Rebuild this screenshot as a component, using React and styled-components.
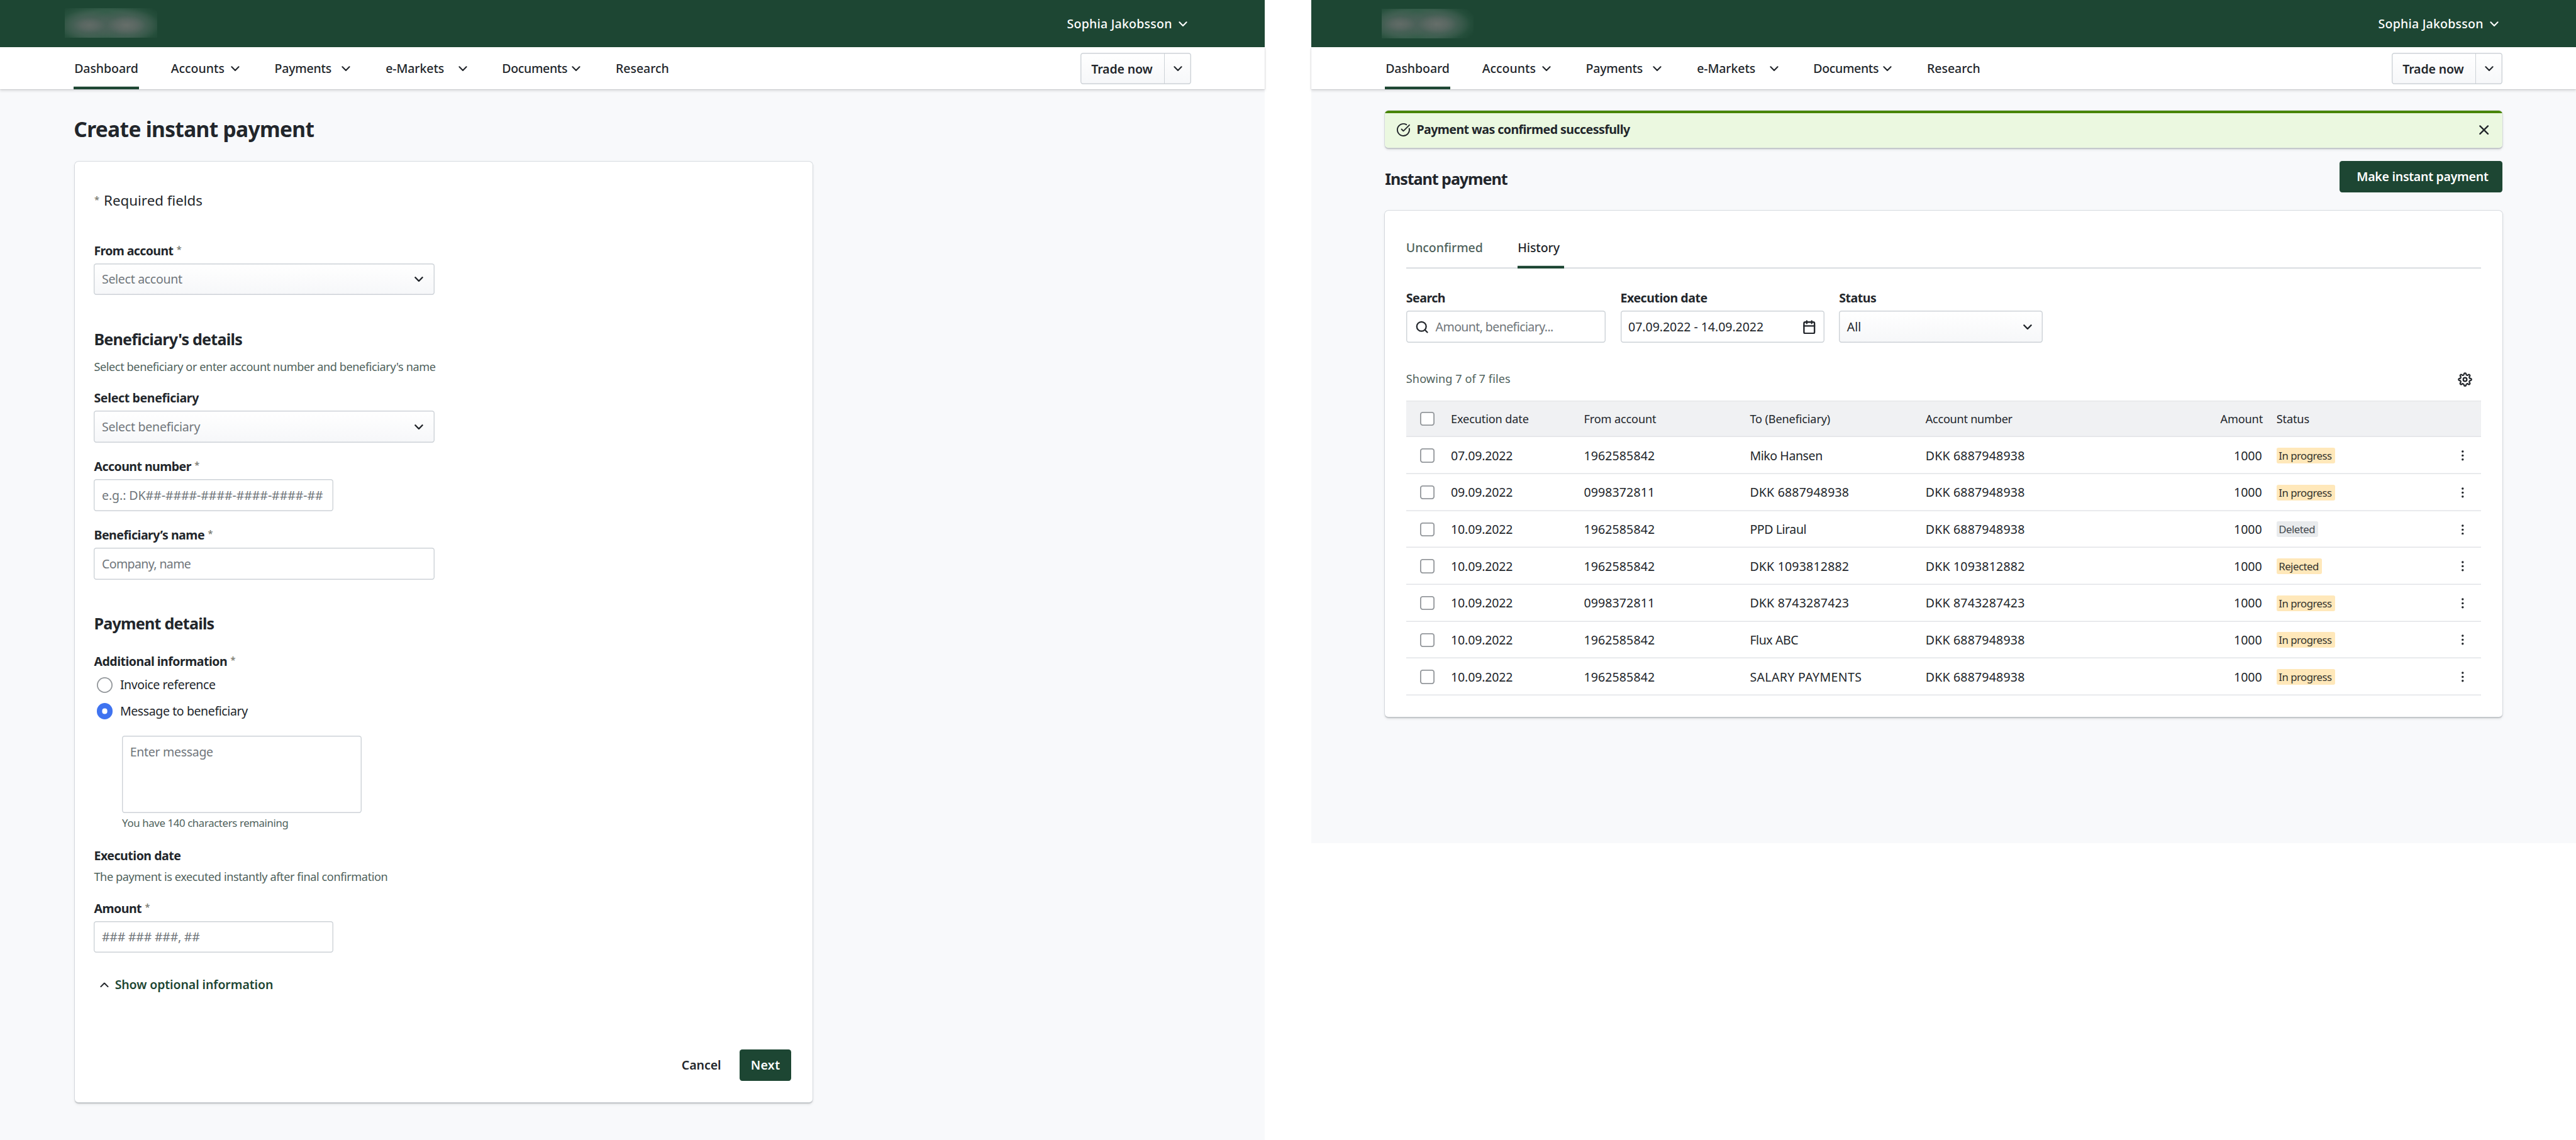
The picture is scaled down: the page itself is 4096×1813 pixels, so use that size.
import React from "react"
import styled, { createGlobalStyle, css } from "styled-components"
import { CircleCheckBig, Search } from "lucide-react"

const ink = "#22262b"
const green = "#1d4633"
const muted = "#4f625c"
const placeholder = "#70767b"
const line = "#cdd2d7"

const navItems = [
  { label: "Dashboard", width: 11, active: true, track: -0.004 },
  { label: "Accounts", width: 11.8, chevron: 6.9, track: -0.002 },
  { label: "Payments", width: 12.65, chevron: 7.7, track: -0.012 },
  { label: "e-Markets", width: 13.25, chevron: 8.35, track: -0.006 },
  { label: "Documents", width: 12.95, chevron: 8, track: -0.018 },
  { label: "Research", width: 8, track: -0.004 },
]

const payments = [
  ["07.09.2022", "1962585842", "Miko Hansen", "DKK 6887948938", "In progress"],
  ["09.09.2022", "0998372811", "DKK 6887948938", "DKK 6887948938", "In progress"],
  ["10.09.2022", "1962585842", "PPD Liraul", "DKK 6887948938", "Deleted"],
  ["10.09.2022", "1962585842", "DKK 1093812882", "DKK 1093812882", "Rejected"],
  ["10.09.2022", "0998372811", "DKK 8743287423", "DKK 8743287423", "In progress"],
  ["10.09.2022", "1962585842", "Flux ABC", "DKK 6887948938", "In progress"],
  ["10.09.2022", "1962585842", "SALARY PAYMENTS", "DKK 6887948938", "In progress"],
]

const cellTrack = text => {
  if (text === "SALARY PAYMENTS") return 0.018
  if (text.startsWith("DKK")) return 0.009
  if (text.includes(".")) return -0.008
  return /^\d+$/.test(text) ? 0.005 : -0.022
}

// outline of a cog with eight round teeth
const cogPath = () => {
  const point = deg => {
    const a = (deg * Math.PI) / 180
    return `${(9 + 6.5 * Math.cos(a)).toFixed(2)} ${(9 + 6.5 * Math.sin(a)).toFixed(2)}`
  }
  let d = `M${point(-10.5)}`
  for (let i = 0; i < 8; i++) {
    d += `A1.2 1.2 0 0 1 ${point(i * 45 + 10.5)}`
    d += `A1.4 1.4 0 0 0 ${point(i * 45 + 34.5)}`
  }
  return d + "Z"
}

const Chevron = ({ up, bold }) => (
  <ChevronSvg viewBox="0 0 10 6" $up={up} strokeWidth={bold ? 1.75 : 1.5}>
    <path d="M1 0.9l4 4.1 4-4.1" />
  </ChevronSvg>
)

const CalendarIcon = () => (
  <CalendarSvg viewBox="0 0 14 16">
    <rect x="1" y="2.3" width="12" height="12.9" rx="1.4" />
    <path d="M1 6.7h12M4.2 1v2.8M9.8 1v2.8" />
  </CalendarSvg>
)

const CogIcon = () => (
  <CogSvg viewBox="0 0 18 18">
    <path d={cogPath()} />
    <circle cx="9" cy="9" r="2.05" />
  </CogSvg>
)

const DotsIcon = () => (
  <DotsSvg viewBox="0 0 4 12">
    <circle cx="2" cy="1.5" r="1.25" />
    <circle cx="2" cy="6" r="1.25" />
    <circle cx="2" cy="10.5" r="1.25" />
  </DotsSvg>
)

const Header = ({ shifted }) => (
  <>
    <TopBar>
      <Logo $shifted={shifted} />
      <User>
        Sophia Jakobsson
        <Chevron />
      </User>
    </TopBar>
    <Nav>
      {navItems.map(item => (
        <NavItem key={item.label} $width={item.width}>
          <NavLabel
            $active={item.active}
            $width={item.chevron}
            $track={item.track}
          >
            {item.label}
          </NavLabel>
          {item.chevron && <Chevron />}
        </NavItem>
      ))}
      <TradeButton>
        <TradeLabel>Trade now</TradeLabel>
        <TradeToggle>
          <Chevron />
        </TradeToggle>
      </TradeButton>
    </Nav>
  </>
)

const Field = ({ label, required, track, gap, children }) => (
  <FieldWrap $gap={gap}>
    <Label $track={track}>
      {label}
      {required && <Star>*</Star>}
    </Label>
    {children}
  </FieldWrap>
)

const CreatePayment = () => (
  <Panel $tall>
    <Header />
    <FormPage>
      <Title>Create instant payment</Title>
      <FormCard>
        <RequiredNote>
          <Star $lead>*</Star>Required fields
        </RequiredNote>
        <Field label="From account" required track={-0.032} gap={3.5}>
          <Box $width={38.75} $select $track={-0.016}>
            Select account
            <Chevron bold />
          </Box>
        </Field>

        <SectionTitle $gap={3.85} $track={-0.031}>
          Beneficiary's details
        </SectionTitle>
        <Hint $gap={0.85}>
          Select beneficiary or enter account number and beneficiary's name
        </Hint>
        <Field label="Select beneficiary" track={-0.018} gap={1.6}>
          <Box $width={38.75} $select $track={-0.013}>
            Select beneficiary
            <Chevron bold />
          </Box>
        </Field>
        <Field label="Account number" required track={-0.028} gap={1.7}>
          <Box $width={27.25} $track={-0.004}>
            e.g.: DK##-####-####-####-####-##
          </Box>
        </Field>
        <Field label="Beneficiary’s name" required track={-0.025} gap={1.7}>
          <Box $width={38.8} $track={-0.032}>
            Company, name
          </Box>
        </Field>

        <SectionTitle $gap={3.85} $track={-0.031}>
          Payment details
        </SectionTitle>
        <Field label="Additional information" required gap={2.05}>
          <Radio>
            <RadioDot />
            Invoice reference
          </Radio>
          <Radio>
            <RadioDot $checked />
            Message to beneficiary
          </Radio>
          <TextArea>Enter message</TextArea>
          <Counter>You have 140 characters remaining</Counter>
        </Field>
        <Label $gap={1.84} $track={-0.025}>
          Execution date
        </Label>
        <Hint $gap={0.43}>
          The payment is executed instantly after final confirmation
        </Hint>
        <Field label="Amount" required gap={1.57}>
          <Box $width={27.25} $track={-0.013}>
            ### ### ###, ##
          </Box>
        </Field>
        <Toggle>
          <Chevron up />
          Show optional information
        </Toggle>
        <Actions>
          <TextButton>Cancel</TextButton>
          <Button $width={5.9} $track={0.018}>
            Next
          </Button>
        </Actions>
      </FormCard>
    </FormPage>
  </Panel>
)

const PaymentHistory = () => (
  <Panel>
    <Header shifted />
    <HistoryPage>
      <Alert>
        <CircleCheckBig />
        <AlertText>Payment was confirmed successfully</AlertText>
        <CloseSvg viewBox="0 0 11 11">
          <path d="M1 1l9 9M10 1l-9 9" />
        </CloseSvg>
      </Alert>
      <PageHead>
        <PageTitle>Instant payment</PageTitle>
        <Button $width={18.5} $track={-0.015} $shift>
          Make instant payment
        </Button>
      </PageHead>
      <HistoryCard>
        <Tabs>
          <Tab $muted>Unconfirmed</Tab>
          <Tab $active>History</Tab>
        </Tabs>
        <Filters>
          <Field label="Search">
            <Box $width={22.7} $track={-0.031} $icon>
              <Search strokeWidth={2.4} />
              Amount, beneficiary...
            </Box>
          </Field>
          <Field label="Execution date" track={-0.025}>
            <Box $width={23.2} $filled $track={-0.003}>
              07.09.2022 - 14.09.2022
              <CalendarIcon />
            </Box>
          </Field>
          <Field label="Status">
            <Box $width={23.2} $filled $select>
              All
              <Chevron bold />
            </Box>
          </Field>
        </Filters>
        <TableBar>
          Showing 7 of 7 files
          <CogIcon />
        </TableBar>
        <HeadRow>
          <Checkbox />
          <HeadCell>Execution date</HeadCell>
          <HeadCell>From account</HeadCell>
          <HeadCell>To (Beneficiary)</HeadCell>
          <HeadCell $track={-0.015}>Account number</HeadCell>
          <HeadCell $right>Amount</HeadCell>
          <HeadCell>Status</HeadCell>
        </HeadRow>
        {payments.map(([date, from, to, account, status], i) => (
          <Row key={i}>
            <Checkbox />
            {[date, from, to, account].map((text, j) => (
              <Cell key={j} $track={cellTrack(text)}>
                {text}
              </Cell>
            ))}
            <Cell $right>1000</Cell>
            <Tag $grey={status === "Deleted"}>{status}</Tag>
            <DotsIcon />
          </Row>
        ))}
      </HistoryCard>
    </HistoryPage>
  </Panel>
)

const App = () => (
  <>
    <GlobalStyle />
    <Canvas>
      <CreatePayment />
      <PaymentHistory />
    </Canvas>
  </>
)

// 1rem is ten units of the 2933 unit wide canvas
const GlobalStyle = createGlobalStyle`
  html {
    font-size: 13.9652px;
  }
  body {
    margin: 0;
    background: #fff;
    color: ${ink};
    font-family: "Noto Sans", "Open Sans", sans-serif;
    font-size: 1.4rem;
    line-height: 2rem;
    overflow: hidden;
  }
  * {
    box-sizing: border-box;
  }
`

const tracking = css`
  letter-spacing: ${p => p.$track || 0}em;
`

const Canvas = styled.div`
  display: flex;
  align-items: flex-start;
  justify-content: space-between;
  width: 293.3rem;
  height: 100vh;
`

const Panel = styled.div`
  width: 144rem;
  height: ${p => (p.$tall ? "100vh" : "96rem")};
  background: #f8f9fb;
`

const TopBar = styled.header`
  display: flex;
  align-items: center;
  justify-content: space-between;
  height: 5.4rem;
  padding: 0 8.8rem 0 7.4rem;
  background: ${green};
`

// two soft spots on a lighter green patch, cut off at the box edges
const spots = (left, right, y) => css`
  background-image:
    radial-gradient(1.8rem 0.9rem at ${left}rem ${y}rem, rgba(130, 126, 124, 0.35), transparent),
    radial-gradient(2.2rem 1.1rem at ${right}rem ${y}rem, rgba(130, 126, 124, 0.45), transparent),
    radial-gradient(3.4rem 1.8rem at ${left}rem ${y}rem, rgba(82, 98, 93, 0.9) 25%, transparent),
    radial-gradient(3.8rem 1.9rem at ${right}rem ${y}rem, rgba(82, 98, 93, 0.9) 30%, transparent),
    radial-gradient(6.8rem 3rem at ${(left + right) / 2}rem ${y}rem, #355d4a 55%, transparent);
`

const Logo = styled.div`
  width: 10.5rem;
  height: 3.4rem;
  margin-left: ${p => (p.$shifted ? "0.6rem" : "0")};
  margin-top: ${p => (p.$shifted ? "0" : "-0.2rem")};
  ${p => (p.$shifted ? spots(2.1, 6.3, 1.75) : spots(2.8, 7, 1.95))}
`

const User = styled.div`
  display: flex;
  align-items: center;
  gap: 0.75rem;
  color: #fff;
  font-weight: 540;
  letter-spacing: 0.011em;
`

const Nav = styled.nav`
  position: relative;
  display: flex;
  height: 4.8rem;
  padding: 0 8.4rem;
  background: #fff;
  box-shadow:
    0 0.05rem 0.1rem rgba(34, 38, 43, 0.4),
    0 0.2rem 0.3rem rgba(34, 38, 43, 0.14);
`

const NavItem = styled.div`
  display: flex;
  align-items: center;
  width: ${p => p.$width}rem;
  font-weight: 540;
`

const NavLabel = styled.span`
  width: ${p => (p.$width ? `${p.$width}rem` : "auto")};
  height: 100%;
  padding-left: 0.06rem;
  line-height: 4.87rem;
  white-space: nowrap;
  ${tracking}
  ${p =>
    p.$active &&
    css`
      width: 7.4rem;
      box-shadow: inset 0 -0.3rem ${green};
    `}
`

const TradeButton = styled.div`
  display: flex;
  width: 12.6rem;
  height: 3.6rem;
  margin: 0.6rem 0 0 auto;
  border-radius: 0.3rem;
  background: linear-gradient(#fff, #f6f7f9);
  box-shadow: inset 0 0 0 0.1rem ${line};
`

const TradeLabel = styled.span`
  width: 9.6rem;
  padding-left: 1.25rem;
  border-right: 0.1rem solid ${line};
  font-weight: 600;
  line-height: 3.66rem;
  letter-spacing: -0.008em;
`

const TradeToggle = styled.span`
  display: flex;
  flex: 1;
  align-items: center;
  justify-content: center;
`

const FormPage = styled.main`
  padding: 2.66rem 0 0 8.5rem;
`

const Title = styled.h1`
  margin: 0 0 1.94rem -0.1rem;
  font-size: 2.4rem;
  font-weight: 700;
  line-height: 3.6rem;
  letter-spacing: -0.02em;
`

const card = css`
  border-radius: 0.4rem;
  box-shadow:
    0 0 0 0.05rem ${line},
    0 0.1rem 0.1rem rgba(34, 38, 43, 0.22),
    0 0.2rem 0.3rem rgba(34, 38, 43, 0.1);
`

const FormCard = styled.section`
  display: flex;
  flex-direction: column;
  width: 84rem;
  height: 107.1rem;
  padding: 3.2rem 2.4rem 2.4rem 2.2rem;
  background: #fff;
  ${card}
`

const RequiredNote = styled.p`
  margin: 0;
  font-size: 1.6rem;
  line-height: 2.4rem;
`

const Star = styled.span`
  position: relative;
  top: -0.28rem;
  margin-left: ${p => (p.$lead ? "0.05rem" : "0.38rem")};
  margin-right: ${p => (p.$lead ? "0.5rem" : "0")};
  color: #7c7c72;
  font-size: 1.05rem;
  font-weight: 600;
  line-height: 1;
`

const FieldWrap = styled.div`
  display: flex;
  flex-direction: column;
  margin-top: ${p => p.$gap || 0}rem;
`

const Label = styled.div`
  margin-top: ${p => p.$gap || 0}rem;
  padding-top: 0.06rem;
  font-weight: 680;
  line-height: 1.94rem;
  letter-spacing: ${p => p.$track || -0.026}em;
`

const Box = styled.div`
  display: flex;
  align-items: center;
  justify-content: ${p => (p.$icon ? "flex-start" : "space-between")};
  gap: 0.75rem;
  width: ${p => p.$width}rem;
  height: 3.6rem;
  margin-top: 0.5rem;
  padding: 0.06rem ${p => (p.$select ? "1.25rem" : "1rem")} 0
    ${p => (p.$icon ? "1rem" : "0.9rem")};
  border-radius: 0.3rem;
  background: ${p => (p.$select ? "linear-gradient(#fff, #f6f7f9)" : "#fff")};
  box-shadow: inset 0 0 0 0.1rem ${line};
  color: ${p => (p.$filled ? ink : placeholder)};
  white-space: nowrap;
  ${tracking}

  .lucide {
    width: 1.6rem;
    height: 1.6rem;
    color: ${ink};
  }
`

const SectionTitle = styled.h2`
  margin: ${p => p.$gap}rem 0 0;
  font-size: 1.8rem;
  font-weight: 690;
  line-height: 2.4rem;
  ${tracking}
`

const Hint = styled.p`
  margin: ${p => p.$gap}rem 0 0;
  padding-top: 0.1rem;
  color: ${muted};
  font-size: 1.3rem;
  line-height: 1.9rem;
  letter-spacing: -0.023em;
`

const Radio = styled.div`
  display: flex;
  align-items: center;
  height: 3rem;
  padding-left: 0.3rem;
  gap: 0.87rem;
  letter-spacing: -0.021em;

  ${Label} + & {
    margin-top: 0.2rem;
  }
`

const RadioDot = styled.span`
  width: 1.8rem;
  height: 1.8rem;
  border-radius: 50%;
  background: #fff;
  box-shadow: inset 0 0 0
    ${p => (p.$checked ? "0.6rem #3f73f0" : "0.13rem #93979b")};
`

const TextArea = styled.div`
  width: 27.3rem;
  height: 8.8rem;
  margin: 1.3rem 0 0 3.2rem;
  padding: 0.85rem 0.9rem;
  border-radius: 0.3rem;
  box-shadow: inset 0 0 0 0.1rem ${line};
  color: ${placeholder};
  letter-spacing: -0.016em;
`

const Counter = styled.p`
  margin: 0.36rem 0 0 3.2rem;
  color: ${muted};
  font-size: 1.2rem;
  line-height: 1.6rem;
  letter-spacing: -0.021em;
`

const Toggle = styled.div`
  display: flex;
  align-items: center;
  gap: 0.68rem;
  margin: 2.64rem 0 0 0.7rem;
  color: ${green};
  font-weight: 600;
  letter-spacing: -0.006em;

  svg {
    color: ${ink};
  }
`

const Actions = styled.div`
  display: flex;
  align-items: center;
  justify-content: flex-end;
  gap: 2.1rem;
  margin-top: auto;
`

const TextButton = styled.span`
  font-weight: 600;
  letter-spacing: -0.004em;
`

const Button = styled.div`
  display: flex;
  align-items: center;
  justify-content: center;
  width: ${p => p.$width}rem;
  height: 3.6rem;
  padding-left: ${p => (p.$shift ? "0.35rem" : "0")};
  border-radius: 0.3rem;
  background: ${green};
  color: #fff;
  font-weight: 600;
  ${tracking}
`

const HistoryPage = styled.main`
  padding: 2.4rem 8.4rem 0;
`

const Alert = styled.div`
  display: flex;
  align-items: center;
  height: 4.25rem;
  padding: 0.1rem 1.5rem 0 1.27rem;
  background: linear-gradient(#478500 0.3rem, #ebf8e0 0.3rem);
  ${card}

  .lucide {
    width: 1.64rem;
    height: 1.64rem;
  }
`

const AlertText = styled.span`
  flex: 1;
  margin-left: 0.68rem;
  font-weight: 680;
  letter-spacing: -0.028em;
`

const PageHead = styled.div`
  display: flex;
  align-items: flex-start;
  justify-content: space-between;
  margin-top: 1.45rem;
`

const PageTitle = styled.h2`
  margin: 0.9rem 0 0;
  font-size: 1.8rem;
  font-weight: 690;
  line-height: 2.4rem;
  letter-spacing: -0.043em;
`

const HistoryCard = styled.section`
  height: 57.6rem;
  margin-top: 2.1rem;
  padding: 3.22rem 2.4rem 0;
  background: #fff;
  ${card}
`

const Tabs = styled.div`
  display: flex;
  gap: 3.9rem;
  height: 3.38rem;
  box-shadow: inset 0 -0.1rem ${line};
`

const Tab = styled.span`
  width: ${p => (p.$active ? "5.3rem" : "8.8rem")};
  color: ${p => (p.$muted ? muted : ink)};
  font-weight: 530;
  letter-spacing: -0.004em;
  box-shadow: ${p => (p.$active ? `inset 0 -0.3rem ${green}` : "none")};
`

const Filters = styled.div`
  display: flex;
  margin-top: 2.3rem;
  gap: 1.7rem;
`

const TableBar = styled.div`
  display: flex;
  align-items: center;
  justify-content: space-between;
  margin: 3.2rem 0 1.4rem;
  padding-right: 0.9rem;
  color: ${muted};
  font-size: 1.3rem;
  letter-spacing: 0.004em;
`

const Row = styled.div`
  display: grid;
  grid-template-columns: 5.1rem 15.14rem 18.9rem 20rem 19.86rem 20.1rem 19.1rem 4.2rem;
  align-items: center;
  height: 4.2rem;
  box-shadow: inset 0 -0.1rem #e2e4e7;
`

const HeadRow = styled(Row)`
  background: #f0f1f3;
  box-shadow:
    inset 0 0.1rem #e6e8ea,
    inset 0 -0.1rem #e2e4e7;
`

const Checkbox = styled.span`
  width: 1.6rem;
  height: 1.6rem;
  margin-left: 1.6rem;
  border-radius: 0.3rem;
  background: #fff;
  box-shadow: inset 0 0 0 0.13rem #93979b;
`

const Cell = styled.span`
  padding-right: ${p => (p.$right ? "1.65rem" : "0")};
  text-align: ${p => (p.$right ? "right" : "left")};
  white-space: nowrap;
  ${tracking}
`

const HeadCell = styled(Cell)`
  padding-top: 0.08rem;
  padding-right: ${p => (p.$right ? "1.55rem" : "0")};
  font-size: 1.3rem;
  letter-spacing: ${p => p.$track || -0.008}em;
`

const Tag = styled.span`
  justify-self: start;
  height: 1.8rem;
  padding: 0 0.35rem 0 0.25rem;
  border-radius: 0.2rem;
  background: ${p => (p.$grey ? "#e9ebed" : "#ffe8ba")};
  color: ${p => (p.$grey ? "#43494e" : "#33332d")};
  font-size: 1.2rem;
  line-height: 1.8rem;
  letter-spacing: -0.029em;
`

const icon = css`
  flex: none;
  fill: none;
  stroke: currentColor;
  stroke-linecap: round;
  stroke-linejoin: round;
`

const ChevronSvg = styled.svg`
  ${icon}
  width: 1rem;
  height: 0.6rem;
  color: ${p => (p.strokeWidth > 1.6 ? ink : "inherit")};
  transform: ${p => (p.$up ? "rotate(180deg)" : "none")};
`

const CalendarSvg = styled.svg`
  ${icon}
  width: 1.4rem;
  height: 1.6rem;
  stroke-width: 1.7;
`

const CogSvg = styled.svg`
  ${icon}
  width: 1.8rem;
  height: 1.8rem;
  color: ${ink};
  stroke-width: 1.6;
`

const CloseSvg = styled.svg`
  ${icon}
  width: 1.1rem;
  height: 1.1rem;
  stroke-width: 1.7;
`

const DotsSvg = styled.svg`
  width: 0.4rem;
  height: 1.2rem;
  justify-self: center;
  fill: ${ink};
`

export default App
